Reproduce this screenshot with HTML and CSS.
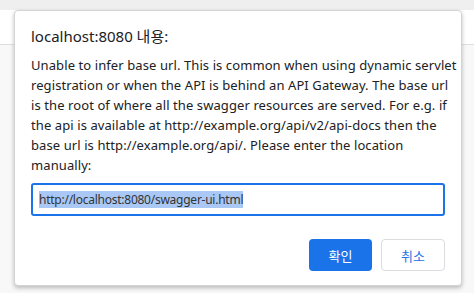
FILE: index.html
```html
<!DOCTYPE html>
<html lang="ko">
<head>
    <meta charset="UTF-8">
    <meta name="viewport" content="width=device-width, initial-scale=1.0">
    <title>localhost:8080</title>
    <link rel="stylesheet" href="styles.css">
</head>
<body>
    <div class="page">
        <div class="tabstrip"></div>
        <div class="toolbar"></div>
        <div class="content"></div>
    </div>

    <div class="dialog">
        <div class="title">localhost:8080 내용:</div>
        <div class="message">
            Unable to infer base url. This is common when using dynamic servlet<br>
            registration or when the API is behind an API Gateway. The base url<br>
            is the root of where all the swagger resources are served. For e.g. if<br>
            the api is available at http://example.org/api/v2/api-docs then the<br>
            base url is http://example.org/api/. Please enter the location<br>
            manually:
        </div>
        <div class="field"><span class="selected">http://localhost:8080/swagger-ui.html</span></div>
        <div class="buttons">
            <button class="btn btn-ok">확인</button>
            <button class="btn btn-cancel">취소</button>
        </div>
    </div>
</body>
</html>
```

FILE: styles.css
```css
body {
    margin: 0;
    font-family: "Noto Sans", "Noto Sans CJK KR", sans-serif;
    color: #202124;
    background-color: #f8f8f8;
}
.page {
    display: flex;
    flex-direction: column;
    height: 100vh;
}
.tabstrip {
    height: 10px;
    background-color: #efefef;
}
.toolbar {
    height: 34px;
    background-color: #ffffff;
    border-bottom: 1px solid #dedede;
}
.content {
    flex: 1;
    background-color: #f8f8f8;
}
.dialog {
    position: absolute;
    left: 14px;
    top: 10px;
    width: 448px;
    height: 276px;
    box-sizing: border-box;
    padding: 14px 16px 14px 16px;
    background: white;
    border: 1px solid #d4d4d4;
    border-radius: 4px;
    box-shadow: 0 2px 4px rgba(0, 0, 0, 0.25);
    display: flex;
    flex-direction: column;
}
.title {
    font-size: 15px;
    line-height: 22px;
    margin-bottom: 8px;
}
.message {
    font-size: 13px;
    line-height: 20px;
    letter-spacing: 0.09px;
    white-space: nowrap;
}
.field {
    margin-top: 8px;
    height: 33px;
    box-sizing: border-box;
    border: 2px solid #1a73e8;
    border-radius: 3px;
    padding: 0 6px;
    display: flex;
    align-items: center;
    font-size: 12px;
    letter-spacing: -0.25px;
}
.selected {
    background-color: #a9c8f5;
    color: #333;
    line-height: 17px;
}
.buttons {
    display: flex;
    justify-content: flex-end;
    gap: 9px;
    margin-top: 23px;
}
.btn {
    width: 63px;
    height: 32px;
    border-radius: 4px;
    font-family: "Noto Sans CJK KR", sans-serif;
    font-size: 13px;
    cursor: pointer;
}
.btn-ok {
    background-color: #1a73e8;
    border: none;
    color: white;
}
.btn-cancel {
    width: 64px;
    background-color: white;
    border: 1px solid #dadce0;
    color: #1a73e8;
}
```
